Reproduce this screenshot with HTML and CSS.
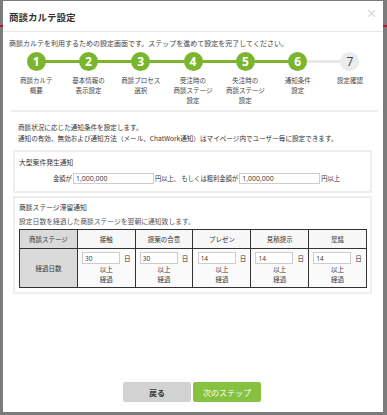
FILE: index.html
```html
<!DOCTYPE html>
<html lang="ja">
<head>
<meta charset="utf-8">
<link rel="stylesheet" href="styles.css">
</head>
<body>
<div class="backdrop-line"></div>
<div class="modal">
  <div class="modal-header">
    <div class="modal-title">商談カルテ設定</div>
    <div class="close">×</div>
  </div>
  <div class="modal-body">
    <p class="intro">商談カルテを利用するための設定画面です。ステップを進めて設定を完了してください。</p>
    <div class="steps">
      <div class="step done"><div class="circle">1</div><div class="label">商談カルテ<br>概要</div></div>
      <div class="step done"><div class="circle">2</div><div class="label">基本情報の<br>表示設定</div></div>
      <div class="step done"><div class="circle">3</div><div class="label">商談プロセス<br>選択</div></div>
      <div class="step done"><div class="circle">4</div><div class="label">受注時の<br>商談ステージ<br>設定</div></div>
      <div class="step done"><div class="circle">5</div><div class="label">失注時の<br>商談ステージ<br>設定</div></div>
      <div class="step done"><div class="circle">6</div><div class="label">通知条件<br>設定</div></div>
      <div class="step todo"><div class="circle">7</div><div class="label">設定確認</div></div>
    </div>
    <div class="divider"></div>
    <p class="desc">商談状況に応じた通知条件を設定します。<br>通知の有効、無効および通知方法（メール、ChatWork通知）はマイページ内でユーザー毎に設定できます。</p>

    <div class="box">
      <div class="box-title">大型案件発生通知</div>
      <div class="amount-row">
        <span>金額が</span><span class="input wide">1,000,000</span><span>円以上、 もしくは粗利金額が</span><span class="input wide">1,000,000</span><span>円以上</span>
      </div>
    </div>

    <div class="box box2">
      <div class="box-title">商談ステージ滞留通知</div>
      <div class="box-sub">設定日数を経過した商談ステージを翌朝に通知致します。</div>
      <table class="stage-table">
        <tr class="head">
          <th class="gray">商談ステージ</th><th>接触</th><th>提案の合意</th><th>プレゼン</th><th>見積提示</th><th>稟議</th>
        </tr>
        <tr class="body-row">
          <th class="gray">経過日数</th>
          <td><div class="day"><span class="input small">30</span><span>日</span></div><div class="cap">以上<br>経過</div></td>
          <td><div class="day"><span class="input small">30</span><span>日</span></div><div class="cap">以上<br>経過</div></td>
          <td><div class="day"><span class="input small">14</span><span>日</span></div><div class="cap">以上<br>経過</div></td>
          <td><div class="day"><span class="input small">14</span><span>日</span></div><div class="cap">以上<br>経過</div></td>
          <td><div class="day"><span class="input small">14</span><span>日</span></div><div class="cap">以上<br>経過</div></td>
        </tr>
      </table>
    </div>

    <div class="spacer"></div>
    <div class="buttons">
      <button class="btn back">戻る</button>
      <button class="btn next">次のステップ</button>
    </div>
  </div>
</div>
</body>
</html>
```
FILE: styles.css
```css
* { box-sizing: border-box; }
html, body { margin: 0; padding: 0; }
body {
  width: 387px;
  height: 415px;
  background: #7b7b7b;
  font-family: "Noto Sans CJK JP", "Noto Sans", sans-serif;
  color: #333;
  position: relative;
  overflow: hidden;
  padding: 1px 4px 3px 3px;
}
.backdrop-line {
  position: absolute;
  left: 0; right: 0; top: 25px;
  height: 2px;
  background: #c8102e;
}
.modal {
  position: relative;
  width: 380px;
  height: 411px;
  background: #fff;
  display: flex;
  flex-direction: column;
}
.modal-header {
  height: 31px;
  border-bottom: 1px solid #e6e6e6;
  display: flex;
  align-items: center;
  justify-content: space-between;
  padding: 2px 6px 0 6px;
}
.modal-title {
  font-size: 9.5px;
  font-weight: bold;
  color: #333;
}
.close {
  font-size: 11px;
  color: #c8c8c8;
  margin-top: -8px;
}
.modal-body {
  flex: 1;
  display: flex;
  flex-direction: column;
  padding: 0 5px 10px 5px;
}
.intro {
  margin: 6px 0 0 1px;
  font-size: 7px;
  line-height: 10px;
  color: #444;
}
.steps {
  display: flex;
  margin: 4px 0 0 2px;
}
.step {
  width: 52.3px;
  position: relative;
  display: flex;
  flex-direction: column;
  align-items: center;
}
.step + .step::before {
  content: "";
  position: absolute;
  top: 8px;
  left: -26px;
  width: 52.3px;
  height: 3px;
  background: #7bb52e;
  z-index: 0;
}
.step.todo::before { background: #e8e8e8; }
.circle {
  position: relative;
  z-index: 1;
  width: 19px;
  height: 19px;
  border-radius: 50%;
  background: #7bb52e;
  color: #fff;
  font-size: 12px;
  font-weight: bold;
  display: flex;
  align-items: center;
  justify-content: center;
  font-family: "Open Sans", "Noto Sans", sans-serif;
}
.step.todo .circle {
  background: #ececec;
  color: #444;
  font-weight: normal;
}
.label {
  margin-top: 5px;
  font-size: 6.5px;
  line-height: 9.8px;
  text-align: center;
  color: #444;
}
.divider {
  margin: 5px 0 0 3px;
  width: 367px;
  height: 2px;
  background: #eee;
}
.desc {
  margin: 10px 0 0 10px;
  font-size: 6.6px;
  line-height: 10.5px;
  color: #333;
}
.box {
  margin: 7px 0 0 5px;
  width: 359px;
  border: 2px solid #eee;
  padding: 5px 4px 7px 4px;
}
.box-title {
  font-size: 6.8px;
  line-height: 10px;
  color: #333;
}
.amount-row {
  margin-top: 6px;
  display: flex;
  align-items: center;
  padding-left: 34px;
  font-size: 6.3px;
}
.input {
  display: inline-flex;
  align-items: center;
  border: 1px solid #ccc;
  background: #fff;
  font-family: "Open Sans", "Noto Sans", sans-serif;
  font-size: 7px;
  color: #333;
  padding-left: 2px;
}
.input.wide { width: 81px; height: 11px; margin: 0 1px; }
.box2 {
  margin-top: 3px;
  padding: 4px 4px 4px 4px;
}
.box-sub {
  margin-top: 4px;
  font-size: 6.8px;
  line-height: 10px;
  color: #555;
}
.stage-table {
  margin-top: 3px;
  width: 348px;
  border-collapse: collapse;
  table-layout: fixed;
  font-size: 6.5px;
}
.stage-table th, .stage-table td {
  border: 1px solid #333;
  text-align: center;
  font-weight: normal;
  color: #333;
  padding: 0;
}
.stage-table .head th { height: 19px; background: #f7f7f7; }
.stage-table .gray { background: #dadada !important; }
.stage-table .body-row th, .stage-table .body-row td { height: 39px; background: #fafafa; }
.stage-table td { vertical-align: top; padding-top: 3px; }
.day {
  display: flex;
  align-items: center;
  justify-content: center;
  gap: 4px;
  padding-left: 0;
}
.input.small { width: 38px; height: 12px; font-size: 6.5px; }
.cap {
  margin-top: 1px;
  font-size: 6.5px;
  line-height: 9.5px;
}
.spacer { flex: 1; }
.buttons {
  display: flex;
  justify-content: center;
  gap: 2px;
  margin-right: 2px;
}
.btn {
  width: 68px;
  height: 20px;
  border: none;
  border-radius: 2px;
  font-family: "Noto Sans CJK JP", sans-serif;
  font-size: 8px;
  padding: 0;
}
.btn.back { background: #d2d2d2; color: #333; font-weight: bold; }
.btn.next { background: #86c240; color: #fff; }
```
